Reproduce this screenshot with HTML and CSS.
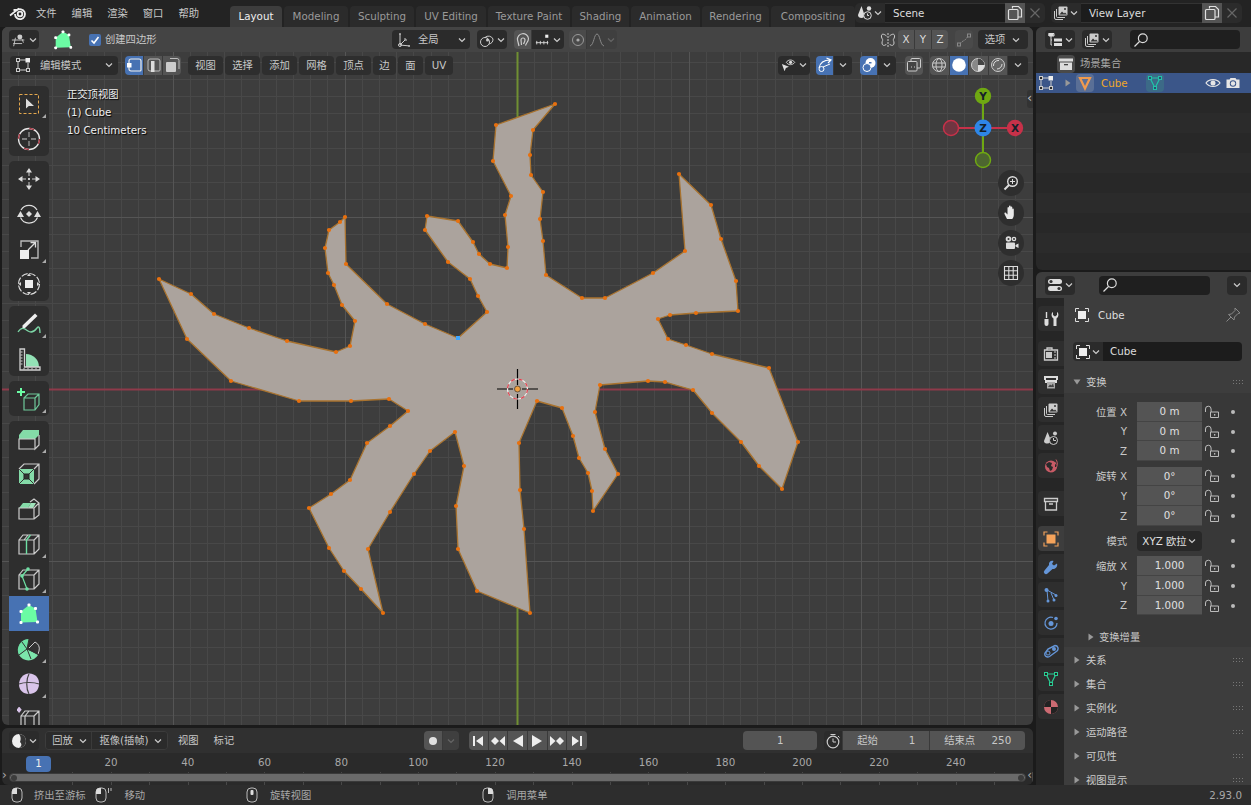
FILE: index.html
```html
<!DOCTYPE html>
<html lang="zh">
<head>
<meta charset="utf-8">
<title>Blender</title>
<link rel="stylesheet" href="styles.css">
</head>
<body>
<svg class="sprite" aria-hidden="true">
<symbol id="chev" viewBox="0 0 10 10"><path d="M2 3.5l3 3 3-3" fill="none" stroke="currentColor" stroke-width="1.2"/></symbol>
<symbol id="trir" viewBox="0 0 10 10"><path d="M2.5 1.5l5 3.5-5 3.5z" fill="#999"/></symbol>
<symbol id="trid" viewBox="0 0 10 10"><path d="M1.5 2.5h7L5 7.5z" fill="#999"/></symbol>
<symbol id="lock" viewBox="0 0 16 16"><path d="M6.5 8h8v5.500h-8zM1.500 8V5a2.800 2.800 0 0 1 5.600 0v3" fill="none" stroke="#bbb"/><rect x="10" y="10" width="1.300" height="1.600" fill="#bbb"/></symbol>
<symbol id="grip" viewBox="0 0 12 6"><path d="M1 1h1v1H1zM4 1h1v1H4zM7 1h1v1H7zM10 1h1v1h-1zM1 4h1v1H1zM4 4h1v1H4zM7 4h1v1H7zM10 4h1v1h-1z" fill="#777"/></symbol>
<symbol id="blender" viewBox="0 0 18 16"><circle cx="11" cy="9" r="2.300" fill="none" stroke="#eee" stroke-width="1.800"/><path d="M1 10.500L8 5H4.500M6 9a5 5 0 1 0 1.800-3.700L10 3.500" fill="none" stroke="#eee" stroke-width="1.800"/></symbol>
<symbol id="toolset" viewBox="0 0 18 16"><circle cx="10" cy="4.500" r="2.800" fill="#ccc"/><path d="M1 8h14M2.500 12h10M5 5.500L3 15M12.500 7l1.500 4" fill="none" stroke="#ccc"/></symbol>
<symbol id="blob" viewBox="0 0 24 24"><path d="M12 3l6.500 3.500L20.500 20 4 20.500 4 9.500z" fill="#6bfca4"/><g fill="#fff"><rect x="10.500" y="1.500" width="3" height="3" rx="1"/><rect x="17" y="5" width="3" height="3" rx="1"/><rect x="19" y="18.500" width="3" height="3" rx="1"/><rect x="2.500" y="19" width="3" height="3" rx="1"/><rect x="2.500" y="8" width="3" height="3" rx="1"/></g></symbol>
<symbol id="orient" viewBox="0 0 16 16"><path d="M4 1.500V13L14 14M4 13L9 8" fill="none" stroke="#ccc"/><path d="M3 2h2M13 13v2M8 7h2v2" fill="none" stroke="#ccc"/><circle cx="4" cy="13" r="1.500" fill="none" stroke="#ccc"/></symbol>
<symbol id="pivot" viewBox="0 0 16 16"><circle cx="6" cy="10" r="4.500" fill="none" stroke="#ccc"/><path d="M6 5.500a5 5 0 0 1 8 1.500a5 5 0 0 1-4 5" fill="none" stroke="#ccc"/><circle cx="8.500" cy="8" r="1.500" fill="#ccc"/></symbol>
<symbol id="magnet" viewBox="0 0 16 16"><path d="M4 14L2.500 8a5.500 5.500 0 0 1 11-1.500c0 3-2 4-3 7M6.500 13L6 8a2 2 0 0 1 4 0c0 1.500-1 3-1.500 4" fill="none" stroke="#ccc" stroke-width="1.200"/></symbol>
<symbol id="incr" viewBox="0 0 18 16"><path d="M1 11h14M2 9v4M6 9v4M10 9v4M14 9v4" fill="none" stroke="#ddd"/><rect x="11.500" y="2" width="3.500" height="3.500" fill="#eee"/></symbol>
<symbol id="propdot" viewBox="0 0 16 16"><circle cx="8" cy="8" r="5.500" fill="none" stroke="#999"/><circle cx="8" cy="8" r="1.600" fill="#aaa"/></symbol>
<symbol id="falloff" viewBox="0 0 16 16"><path d="M1 14C5 13 5 2 8 2s3 11 7 12" fill="none" stroke="#888"/></symbol>
<symbol id="mirror" viewBox="0 0 16 16"><path d="M8 1v14" stroke="#ccc" stroke-dasharray="2 1"/><path d="M6.500 4C3 1 1 2 1.500 5c.3 1.500 1.500 3 1.500 3s-1 1-1 3c0 3 3 3 4.500 1M9.500 4C13 1 15 2 14.500 5c-.3 1.500-1.500 3-1.500 3s1 1 1 3c0 3-3 3-4.500 1" fill="none" stroke="#ccc"/></symbol>
<symbol id="automerge" viewBox="0 0 16 16"><path d="M4 12C6 8 9 10 12 4" fill="none" stroke="#888" stroke-dasharray="2 1"/><rect x="1.500" y="11" width="3" height="3" fill="none" stroke="#888"/><rect x="11.500" y="2" width="3" height="3" fill="none" stroke="#888"/></symbol>
<symbol id="editmode" viewBox="0 0 16 16"><path d="M3 3h8M3 3v10h10V6" fill="none" stroke="#ccc"/><rect x="1.500" y="1.500" width="3" height="3" fill="#2a2a2a" stroke="#ccc"/><rect x="1.500" y="11.500" width="3" height="3" fill="#2a2a2a" stroke="#ccc"/><rect x="11.500" y="11.500" width="3" height="3" fill="#2a2a2a" stroke="#ccc"/><rect x="10.500" y="1" width="4.500" height="4.500" fill="#eee"/></symbol>
<symbol id="selv" viewBox="0 0 16 16"><path d="M3 4a2 2 0 0 1 2-2h8a2 2 0 0 1 2 2v9a1 1 0 0 1-1 1H5a2 2 0 0 1-2-2z" fill="none" stroke="#eee" stroke-width="1.200"/><rect x="1" y="6" width="4.500" height="4.500" fill="#fff"/></symbol>
<symbol id="sele" viewBox="0 0 16 16"><path d="M3 4a2 2 0 0 1 2-2h8a2 2 0 0 1 2 2v9a1 1 0 0 1-1 1H5a2 2 0 0 1-2-2z" fill="none" stroke="#bbb"/><rect x="6" y="4" width="3.500" height="11" fill="#ddd"/></symbol>
<symbol id="self" viewBox="0 0 16 16"><path d="M6 1.500h7a2 2 0 0 1 2 2V12" fill="none" stroke="#bbb"/><rect x="2" y="5" width="10" height="10" rx="1" fill="#ccc"/></symbol>
<symbol id="vis" viewBox="0 0 18 16"><path d="M6 5c2-3.500 7-3.500 9.500 0-2.500 3.500-7.500 3.500-9.500 0z" fill="none" stroke="#ddd"/><circle cx="10.800" cy="5" r="1.800" fill="#ddd"/><path d="M1 7l8 3-3.500 1.500L4 15z" fill="#ddd"/></symbol>
<symbol id="gizmoic" viewBox="0 0 16 16"><path d="M2 11C3 6 7 3 13 3M9.500 1L14 3l-3 3" fill="none" stroke="#fff" stroke-width="1.200"/><circle cx="4.500" cy="12" r="2.500" fill="none" stroke="#fff"/><path d="M6 10L13 7" stroke="#fff"/></symbol>
<symbol id="overlay" viewBox="0 0 16 16"><circle cx="9.500" cy="6" r="5" fill="#fff"/><circle cx="6" cy="10.500" r="4" fill="#4772b3" stroke="#fff"/><path d="M8 5h2.500v1.500H8z" fill="#4772b3"/></symbol>
<symbol id="xray" viewBox="0 0 16 16"><rect x="5" y="1.500" width="9.500" height="9.500" rx="1" fill="none" stroke="#ccc"/><rect x="1.500" y="4.500" width="9.500" height="9.500" rx="1" fill="#444" stroke="#ccc"/><path d="M5 10h1M8 10h1" stroke="#ccc"/></symbol>
<symbol id="shwire" viewBox="0 0 16 16"><circle cx="8" cy="8" r="6.500" fill="none" stroke="#ccc"/><ellipse cx="8" cy="8" rx="3" ry="6.500" fill="none" stroke="#ccc"/><path d="M1.500 6h13M1.500 10h13" stroke="#ccc"/></symbol>
<symbol id="shsolid" viewBox="0 0 16 16"><circle cx="8" cy="8" r="6.800" fill="#fff"/></symbol>
<symbol id="shmat" viewBox="0 0 16 16"><circle cx="8" cy="8" r="6.500" fill="#888" stroke="#ccc"/><path d="M8 1.500a6.500 6.500 0 0 1 6.500 6.500H8z" fill="#444"/><path d="M8 8h6.500A6.500 6.500 0 0 1 8 14.500z" fill="#ddd"/></symbol>
<symbol id="shrend" viewBox="0 0 16 16"><circle cx="8" cy="8" r="6.500" fill="#666" stroke="#ccc"/><path d="M3.500 9A5 5 0 0 1 9 3.500M12 7a5 5 0 0 1-5 5" fill="none" stroke="#ddd"/></symbol>
<symbol id="zoomin" viewBox="0 0 16 16"><circle cx="9.500" cy="6.500" r="4.800" fill="none" stroke="#ddd" stroke-width="1.400"/><path d="M6 10L1.500 14.500" stroke="#ddd" stroke-width="2"/><path d="M7 6.500h5M9.500 4v5" stroke="#ddd"/></symbol>
<symbol id="hand" viewBox="0 0 16 16"><path d="M4 14L1.500 9c-.5-1 .8-2 1.500-1l1.500 1.500V3c0-1.200 1.500-1.200 1.500 0v4-5.500c0-1.200 1.700-1.200 1.700 0V7 2.500c0-1.200 1.600-1.200 1.600 0V7.500 4.500c0-1.200 1.500-1.200 1.500 0V10c0 2-1 3-1.500 4z" fill="#e8e8e8"/></symbol>
<symbol id="camnav" viewBox="0 0 16 16"><circle cx="5.500" cy="4" r="2.800" fill="#ddd"/><circle cx="11" cy="4" r="2.300" fill="#ddd"/><rect x="3" y="7.500" width="9" height="6.500" rx="1" fill="#ddd"/><path d="M12.500 10l3-1.500v4.500l-3-1.500z" fill="#ddd"/><circle cx="5.500" cy="4" r="1" fill="#333"/><circle cx="11" cy="4" r="1" fill="#333"/></symbol>
<symbol id="gridic" viewBox="0 0 16 16"><path d="M1.500 1.500h13v13h-13zM1.500 5.800h13M1.500 10.200h13M5.800 1.500v13M10.200 1.500v13" fill="none" stroke="#ddd" stroke-width="1.100"/></symbol>

<symbol id="t-select" viewBox="0 0 24 24"><rect x="2.500" y="2.500" width="19" height="19" fill="none" stroke="#e4a84e" stroke-dasharray="3 2"/><path d="M9 6.500l0 10 2.800-2.500H17z" fill="#ddd"/></symbol>
<symbol id="t-cursor" viewBox="0 0 24 24"><circle cx="12" cy="12" r="10.500" fill="none" stroke="#e6e6e6" stroke-width="1.300"/><circle cx="12" cy="12" r="10.500" fill="none" stroke="#a8323f" stroke-width="1.300" stroke-dasharray="5 11.500"/><path d="M12 5v5M12 14v5M5 12h5M14 12h5" stroke="#999" stroke-width="1.300"/></symbol>
<symbol id="t-move" viewBox="0 0 24 24"><path d="M12 1l3 4.500H9zM12 23l3-4.500H9zM1 12l4.500-3v6zM23 12l-4.500-3v6z" fill="#ddd"/><path d="M12 5v4M12 15v4M5 12h4M15 12h4" stroke="#ccc"/><rect x="11" y="11" width="2" height="2" fill="#ccc"/></symbol>
<symbol id="t-rotate" viewBox="0 0 24 24"><path d="M4 8a9.300 9.300 0 0 1 16 0M20.500 15.500a9.300 9.300 0 0 1-17 0" fill="none" stroke="#ddd" stroke-width="1.200"/><path d="M12 9l3 3-3 3-3-3z" fill="#ddd"/><path d="M0 15l3.500-6 3.500 6zM17 15l3.500-6 3.500 6z" fill="#ddd"/></symbol>
<symbol id="t-scale" viewBox="0 0 24 24"><path d="M4 10V4h17v17h-7" fill="none" stroke="#bbb" stroke-width="1.400"/><rect x="3" y="13" width="9" height="9" fill="#eee"/><path d="M11 13l7-7M13.500 5.500H18.500V10.500" fill="none" stroke="#ddd" stroke-width="1.300"/></symbol>
<symbol id="t-transform" viewBox="0 0 24 24"><circle cx="12" cy="12" r="10.500" fill="none" stroke="#ddd" stroke-width="1.200" stroke-dasharray="6.500 1.750"/><rect x="8" y="8" width="8" height="8" fill="#eee"/><path d="M12 1.500l2 2.500h-4zM12 22.500l2-2.500h-4zM1.500 12l2.500-2v4zM22.500 12l-2.500-2v4z" fill="#ddd"/></symbol>
<symbol id="t-annot" viewBox="0 0 24 24"><path d="M1 20c4-6 7-3 10-1s6 1 9-3 3 5 3 5" fill="none" stroke="#7ed8a8" stroke-width="1.300"/><path d="M18 1.500l2.500 2.500L8 16H5.500v-2.500z" fill="#eee"/></symbol>
<symbol id="t-measure" viewBox="0 0 24 24"><path d="M9 7a13 13 0 0 1 13 13H9z" fill="#93e2b6"/><path d="M3 2h4.500v18H23v3H3z" fill="none" stroke="#d0d0d0" stroke-width="1.300"/><path d="M3.500 5h2M3.500 8h2M3.500 11h2M3.500 14h2M3.500 17h2M7 21v1.500M11 21v1.500M15 21v1.500M19 21v1.500" stroke="#d0d0d0"/></symbol>
<symbol id="t-add" viewBox="0 0 24 24"><path d="M7 11l4-4h11v10.500L18 23H7zM7 11h11v12M18 11l4-4" fill="none" stroke="#6ec99a" stroke-width="1.200"/><path d="M4 1v8M0 5h8" stroke="#6bfca4" stroke-width="2"/></symbol>
<symbol id="t-extrude" viewBox="0 0 24 24"><path d="M2 8l4-5h16v5l-4 4H2z" fill="#84dba8"/><path d="M2 12h16v10H2zM18 12v10l4-4V8" fill="none" stroke="#ccc" stroke-width="1.200"/></symbol>
<symbol id="t-inset" viewBox="0 0 24 24"><path d="M2 7h15v15H2z" fill="#84dba8"/><rect x="7" y="12" width="5" height="5" fill="#333" stroke="#222"/><path d="M2 7l5 5M17 7l-5 5M2 22l5-5M17 22l-5-5" stroke="#333"/><path d="M2 7l5-5h15v15l-5 5M17 7l5-5" fill="none" stroke="#ccc" stroke-width="1.200"/></symbol>
<symbol id="t-bevel" viewBox="0 0 24 24"><path d="M2 11l4-5h8l-3 5z" fill="#84dba8"/><path d="M11 11l3-5h5l-3 5z" fill="#9fe3bb"/><path d="M2 11h15v11H2zM17 11l5-5-5-4-4 3M17 22l5-4V6" fill="none" stroke="#ccc" stroke-width="1.200"/></symbol>
<symbol id="t-loop" viewBox="0 0 24 24"><path d="M2 8h15v14H2zM2 8l4-5h16v14l-5 5M17 8l5-5M7 8l4-5" fill="none" stroke="#ccc" stroke-width="1.200"/><path d="M9.500 8v14M9.500 8l4-5" stroke="#6ee0a4" stroke-width="1.400" fill="none"/></symbol>
<symbol id="t-knife" viewBox="0 0 24 24"><path d="M2 8h15v14H2zM2 8l4-5h16v14l-5 5M17 8l5-5" fill="none" stroke="#ccc" stroke-width="1.200"/><path d="M5 9l5 13M5 9l6-7" stroke="#6ee0a4" stroke-width="1.200" fill="none"/><circle cx="5" cy="9" r="1.800" fill="#6ee0a4"/><circle cx="11" cy="2" r="1.800" fill="#6ee0a4"/><circle cx="10" cy="22" r="1.800" fill="#6ee0a4"/></symbol>
<symbol id="t-spin" viewBox="0 0 24 24"><path d="M10 12L12 2A11 11 0 0 0 2 18z" fill="#6ee0a4"/><path d="M10 12L2 18a11 11 0 0 0 19 0z" fill="#7ce5ab"/><path d="M12 11l6-6a8 8 0 0 1 4 9l-1 3" fill="#333" stroke="#ccc"/><path d="M10 12L5 5M10 12L14 22M10 12L2 18M10 12L21 17M10 12l2-10" stroke="#333" fill="none"/></symbol>
<symbol id="t-smooth" viewBox="0 0 24 24"><path d="M12 1.500c7 0 10.500 5 10 11s-4 9.500-10 9.500-10-4-10-9.500S6 1.500 12 1.500z" fill="#d9c4ea"/><path d="M2 12c5-2 15-2 20 0M12 2c-3 5-3 15 0 20" fill="none" stroke="#444" stroke-width="1.200"/></symbol>
<symbol id="t-shrink" viewBox="0 0 24 24"><path d="M4 9h13v15H4zM4 9l4-5h14v15l-5 5M17 9l5-5M8 9l4-5M8 9v15" fill="none" stroke="#ccc" stroke-width="1.200"/><path d="M2 0l2 2.500L2 5 0 2.500z" fill="#d9c4ea" transform="translate(-0.500 -0.500) scale(1.300)"/></symbol>

<symbol id="outmode" viewBox="0 0 16 16"><path d="M2 1.500h5v2.500H2zM4 4v9h1M4 8h1" fill="none" stroke="#ddd"/><rect x="1.500" y="1" width="5" height="3" fill="#ddd"/><rect x="7" y="6.500" width="8" height="3" fill="#ddd"/><rect x="7" y="11" width="8" height="3" fill="#ddd"/></symbol>
<symbol id="layers" viewBox="0 0 16 16"><path d="M1.500 6v7a1.500 1.500 0 0 0 1.500 1.500h7M3.500 4v7.500a1 1 0 0 0 1 1H12" fill="none" stroke="#ccc"/><rect x="5.500" y="1.500" width="9" height="9" rx="1" fill="#ccc"/><path d="M6.500 9.500l2.500-3 2 2 1-1 2 2z" fill="#333"/><circle cx="12" cy="4" r="1" fill="#333"/></symbol>
<symbol id="search" viewBox="0 0 16 16"><circle cx="9.800" cy="6.200" r="4.400" fill="none" stroke="#ddd" stroke-width="1.200"/><path d="M6.500 9.500l-5 5" stroke="#ddd" stroke-width="1.300"/></symbol>
<symbol id="copy" viewBox="0 0 16 16"><path d="M5.500 3.500V1.500h6l3 3V12H11" fill="none" stroke="#e0e0e0" stroke-width="1.200"/><rect x="1.500" y="4.500" width="9.500" height="10" rx="1" fill="none" stroke="#e0e0e0" stroke-width="1.200"/></symbol>
<symbol id="xic" viewBox="0 0 16 16"><path d="M3.500 3.500l9 9M12.500 3.500l-9 9" stroke="#666" stroke-width="1.200"/></symbol>
<symbol id="scene" viewBox="0 0 16 16"><path d="M4.500 1L1 10c0 2 1.500 3 3.500 3s3-1 3-3z" fill="#ddd"/><circle cx="12" cy="3.500" r="2.200" fill="#ddd"/><circle cx="10.500" cy="10.500" r="3.800" fill="#333" stroke="#ddd"/><path d="M10.500 8.500v2h1.500" stroke="#ddd" fill="none"/></symbol>
<symbol id="box" viewBox="0 0 16 16"><path d="M1 2.500h14v3H1z" fill="#ddd"/><path d="M2 6.500h12V14H2z" fill="#ddd"/><rect x="6" y="8" width="4" height="1.300" fill="#444"/></symbol>
<symbol id="meshtri" viewBox="0 0 16 16"><path d="M3 3h10L8 13.500z" fill="none" stroke="#f09a4e" stroke-width="2.200"/></symbol>
<symbol id="datatri" viewBox="0 0 16 16"><path d="M3 3h10L8 13z" fill="none" stroke="#21c3a8" stroke-width="1.200"/><rect x="1.500" y="1.500" width="3" height="3" fill="#2c4b73" stroke="#21c3a8"/><rect x="11.500" y="1.500" width="3" height="3" fill="#2c4b73" stroke="#21c3a8"/><rect x="6.500" y="11.500" width="3" height="3" fill="#2c4b73" stroke="#21c3a8"/></symbol>
<symbol id="eye" viewBox="0 0 16 16"><path d="M1 8c3-4.500 11-4.500 14 0-3 4.500-11 4.500-14 0z" fill="none" stroke="#e6e6e6" stroke-width="1.200"/><circle cx="8" cy="8" r="2.500" fill="#e6e6e6"/></symbol>
<symbol id="cam" viewBox="0 0 16 16"><path d="M1.500 4.500h3L5.500 3h5l1 1.500h3V13h-13z" fill="#e6e6e6"/><circle cx="8" cy="8.500" r="3.200" fill="#3b5689"/><circle cx="8" cy="8.500" r="2.200" fill="#e6e6e6"/></symbol>
<symbol id="obj" viewBox="0 0 16 16"><path d="M1.500 5V1.500H5M11 1.500h3.500V5M14.500 11v3.500H11M5 14.500H1.500V11" fill="none" stroke="#ddd"/><rect x="4" y="4" width="8" height="8" fill="#eee"/></symbol>
<symbol id="objo" viewBox="0 0 16 16"><path d="M1 4.500V1h3.500M11.500 1H15v3.500M15 11.500V15h-3.500M4.500 15H1v-3.500" fill="none" stroke="#f0a05a" stroke-width="1.200"/><rect x="3.500" y="3.500" width="9" height="9" fill="#f5a35b"/></symbol>
<symbol id="pin" viewBox="0 0 16 16"><path d="M10 1l5 5-2 .5-3.500 3.500-.5 3-5.500-5.500 3-.5L10 3.500zM6 10l-4.500 4.500" fill="none" stroke="#888"/></symbol>
<symbol id="ptool" viewBox="0 0 16 16"><path d="M3.500 1v6" stroke="#ddd" stroke-width="1.400"/><path d="M1.500 8h4v5a2 2 0 0 1-4 0z" fill="#ddd"/><path d="M10 1v3l2 1.500L14 4V1c2 1 2 5-.5 6.500V15h-3V7.500C8 6 8 2 10 1z" fill="#ddd"/></symbol>
<symbol id="prender" viewBox="0 0 16 16"><path d="M1.500 4h13v10h-13zM4 4V2h5v2" fill="none" stroke="#ccc" stroke-width="1.300"/><rect x="3" y="6" width="6" height="6" fill="#ccc"/><path d="M11 6h2M11 9h2M11 12h2" stroke="#ccc"/></symbol>
<symbol id="poutput" viewBox="0 0 16 16"><path d="M1 2h14v4h-2V4H3v2H1zM2 6h12v3H2z" fill="#ddd"/><rect x="4" y="8" width="8" height="6.500" fill="#aaa"/><path d="M5 13l2-2.500 1.500 1 1.500-2 1 3.500z" fill="#444"/></symbol>
<symbol id="pscene" viewBox="0 0 16 16"><path d="M4.500 2L1 11c0 2 1.500 2.500 3.500 2.500 1 0 2-.5 3-1.500V9z" fill="#ccc"/><circle cx="12" cy="3.500" r="2" fill="#ccc"/><circle cx="10.500" cy="10.500" r="4" fill="#2a2a2a" stroke="#ccc"/><path d="M10.500 8v2.500H13" stroke="#ccc" fill="none"/></symbol>
<symbol id="pworld" viewBox="0 0 16 16"><circle cx="8" cy="8.500" r="6" fill="#c85b66"/><path d="M3 6l3-2 3 1-1 3 2 1-1 3-2 1-1-3-2-1zM12 6l2 1v2l-2 0z" fill="#2a2a2a"/><path d="M13 1.500C15.500 5 14.500 11 9 14" fill="none" stroke="#c85b66"/></symbol>
<symbol id="pcoll" viewBox="0 0 16 16"><path d="M1.500 2.500h13v3h-13zM2.500 5.500v8.500h11V5.500M6 8h4" fill="none" stroke="#ccc" stroke-width="1.300"/></symbol>
<symbol id="pmod" viewBox="0 0 16 16"><path d="M14 4.500l-3 2-2-1.500 1.500-3C8 1 5.500 3 6 6L1.500 11.500a2 2 0 0 0 3 3L9.500 10c3 .5 5.500-2.500 4.500-5.500z" fill="#6596d8"/></symbol>
<symbol id="ppart" viewBox="0 0 16 16"><path d="M4 3l1 11M4 3l9 5" stroke="#6596d8"/><circle cx="3.500" cy="3" r="2" fill="#6596d8"/><circle cx="5" cy="14" r="1.500" fill="#6596d8"/><circle cx="13" cy="8.500" r="1.500" fill="#6596d8"/><circle cx="11" cy="13" r="1.500" fill="#6596d8"/><path d="M8 6l3 7" stroke="#6596d8"/></symbol>
<symbol id="pphys" viewBox="0 0 16 16"><path d="M10 2.500A6 6 0 1 0 14 8" fill="none" stroke="#6596d8" stroke-width="1.200"/><circle cx="8" cy="8.500" r="2.500" fill="#6596d8"/><circle cx="13" cy="3.500" r="1.800" fill="#6596d8"/></symbol>
<symbol id="pcons" viewBox="0 0 16 16"><path d="M2 10c-1 3 2 5 4.500 3.500L14 8c2-2 1-5.500-2-5.500L5 6z" fill="none" stroke="#6596d8" stroke-width="1.400"/><circle cx="5" cy="10" r="2" fill="none" stroke="#6596d8"/><circle cx="11" cy="6" r="2" fill="#6596d8"/></symbol>
<symbol id="pdata" viewBox="0 0 16 16"><path d="M3 3h10L8 13z" fill="none" stroke="#2acb93" stroke-width="1.200"/><rect x="1.500" y="1.500" width="3" height="3" fill="#222" stroke="#2acb93"/><rect x="11.500" y="1.500" width="3" height="3" fill="#222" stroke="#2acb93"/><rect x="6.500" y="11.500" width="3" height="3" fill="#222" stroke="#2acb93"/></symbol>
<symbol id="pmat" viewBox="0 0 16 16"><circle cx="8" cy="8" r="7" fill="#cc6a72"/><path d="M8 8h7a7 7 0 0 1-7 7zM1 8a7 7 0 0 1 7-7v7z" fill="#222"/></symbol>
<symbol id="ptoggle" viewBox="0 0 16 16"><rect x="1" y="2" width="14" height="5" rx="2.500" fill="#ddd"/><rect x="1" y="9" width="14" height="5" rx="2.500" fill="#ddd"/><circle cx="4" cy="4.500" r="1.600" fill="#333"/><circle cx="12" cy="11.500" r="1.600" fill="#333"/></symbol>

<symbol id="timeic" viewBox="0 0 16 16"><circle cx="8" cy="8" r="7" fill="#eee"/><path d="M8 1a7 7 0 0 1 0 14c3-2 3-4 1-6 1-3 1-5-1-8z" fill="#333"/></symbol>
<symbol id="rec" viewBox="0 0 16 16"><circle cx="8" cy="8" r="4" fill="#e0e0e0"/></symbol>
<symbol id="jstart" viewBox="0 0 16 16"><path d="M3 3h2v10H3zM13 3v10L6 8z" fill="#eee"/></symbol>
<symbol id="kprev" viewBox="0 0 16 16"><path d="M5 4l4 4-4 4-4-4zM15 3v10L9.500 8z" fill="#eee"/></symbol>
<symbol id="prev" viewBox="0 0 16 16"><path d="M13 2v12L3 8z" fill="#eee"/></symbol>
<symbol id="play" viewBox="0 0 16 16"><path d="M3 2v12l10-6z" fill="#eee"/></symbol>
<symbol id="knext" viewBox="0 0 16 16"><path d="M11 4l4 4-4 4-4-4zM1 3v10L6.500 8z" fill="#eee"/></symbol>
<symbol id="jend" viewBox="0 0 16 16"><path d="M13 3h-2v10h2zM3 3v10l7-5z" fill="#eee"/></symbol>
<symbol id="timer" viewBox="0 0 16 16"><circle cx="8" cy="9" r="5.800" fill="none" stroke="#ccc" stroke-width="1.200"/><path d="M5.500 1.500h5M8 5.500V9h3M13 3l1.500 1.500" fill="none" stroke="#ccc"/></symbol>
<symbol id="mouseL" viewBox="0 0 16 16"><rect x="3" y="1" width="10" height="14" rx="4" fill="none" stroke="#bbb"/><path d="M3 5a4 4 0 0 1 4-4h1v6H3z" fill="#ddd"/></symbol>
<symbol id="mouseD" viewBox="0 0 20 16"><rect x="2" y="1" width="10" height="14" rx="4" fill="none" stroke="#bbb"/><path d="M2 5a4 4 0 0 1 4-4h1v6H2z" fill="#ddd"/><path d="M14.500 1v5M17 1v3" stroke="#bbb"/></symbol>
<symbol id="mouseM" viewBox="0 0 16 16"><rect x="3" y="1" width="10" height="14" rx="4" fill="none" stroke="#bbb"/><rect x="6.500" y="3" width="3" height="5" rx="1" fill="#ddd"/></symbol>
<symbol id="mouseR" viewBox="0 0 16 16"><rect x="3" y="1" width="10" height="14" rx="4" fill="none" stroke="#bbb"/><path d="M13 5a4 4 0 0 0-4-4H8v6h5z" fill="#ddd"/></symbol>
</svg>

<header class="topbar">
  <svg class="ic logo"><use href="#blender"/></svg>
  <nav class="mainmenu"><span>文件</span><span>编辑</span><span>渲染</span><span>窗口</span><span>帮助</span></nav>
  <div class="tabs">
    <span class="tab active">Layout</span><span class="tab">Modeling</span><span class="tab">Sculpting</span><span class="tab">UV Editing</span><span class="tab">Texture Paint</span><span class="tab">Shading</span><span class="tab">Animation</span><span class="tab">Rendering</span><span class="tab">Compositing</span>
  </div>
  <div class="idfield scene">
    <span class="idicon"><svg class="ic"><use href="#scene"/></svg><svg class="chev"><use href="#chev"/></svg></span>
    <span class="idname">Scene</span>
    <span class="idbtn lit"><svg class="ic"><use href="#copy"/></svg></span>
    <span class="idbtn"><svg class="ic"><use href="#xic"/></svg></span>
  </div>
  <div class="idfield layer">
    <span class="idicon"><svg class="ic"><use href="#layers"/></svg><svg class="chev"><use href="#chev"/></svg></span>
    <span class="idname">View Layer</span>
    <span class="idbtn lit"><svg class="ic"><use href="#copy"/></svg></span>
    <span class="idbtn"><svg class="ic"><use href="#xic"/></svg></span>
  </div>
</header>

<main class="workspace">
  <div class="leftcol">
    <section class="viewport">
      <svg class="canvas" viewBox="2 27 1031 698" aria-hidden="true">
        <defs>
          <pattern id="gridminor" x="517" y="389" width="172" height="172" patternUnits="userSpaceOnUse">
            <path shape-rendering="crispEdges" d="M17.200 0V172M34.400 0V172M51.600 0V172M68.800 0V172M86 0V172M103.200 0V172M120.400 0V172M137.600 0V172M154.800 0V172M0 17.200H172M0 34.400H172M0 51.600H172M0 68.800H172M0 86H172M0 103.200H172M0 120.400H172M0 137.600H172M0 154.800H172" stroke="#484848" fill="none"/>
            <path shape-rendering="crispEdges" d="M.5 0V172M0 .5H172" stroke="#555" fill="none"/>
          </pattern>
        </defs>
        <rect x="2" y="27" width="1031" height="698" fill="url(#gridminor)"/>
        <path d="M2 389.500H1033" stroke="#8e3a4a" stroke-width="2"/>
        <path d="M517.500 52V725" stroke="#708f33" stroke-width="2"/>
        <path d="M159 279L191 294 214 314 249 328 287 341 336 352 350 346 355 321 342 305 334 285 328 273 325 248 329 230 340 222 345 217 346 264 387 304 425 324 458 338 487 312 478 296 470 279 448 262 425 230 427 216 458 221 473 242 479 254 490 264 507 268 508 247 505 215 511 196 493 161 496 125 555 104 533 130 530 155 531 175 543 192 540 219 543 241 546 275 582 298 605 298 653 273 685 251 679 174 711 205 721 239 736 281 738 311 696 313 670 315 658 319 668 339 686 345 712 354 769 368 798 442 782 489 759 466 741 442 712 413 693 390 665 382 648 381 600 385 595 412 605 449 618 474 593 511 592 491 588 473 579 458 573 436 562 408 537 401 519 443 520 490 524 529 530 613 477 591 458 549 456 506 464 466 455 432 430 451 414 474 390 512 368 549 383 613 361 589 344 571 329 548 309 508 331 494 350 480 367 443 390 426 408 411 389 399 351 401 299 401 231 381 187 339Z" fill="#aba39d" stroke="#a9732f" stroke-width="1.300" stroke-linejoin="round"/>
        <path d="M159 279h0M191 294h0M214 314h0M249 328h0M287 341h0M336 352h0M350 346h0M355 321h0M342 305h0M334 285h0M328 273h0M325 248h0M329 230h0M340 222h0M345 217h0M346 264h0M387 304h0M425 324h0M487 312h0M478 296h0M470 279h0M448 262h0M425 230h0M427 216h0M458 221h0M473 242h0M479 254h0M490 264h0M507 268h0M508 247h0M505 215h0M511 196h0M493 161h0M496 125h0M555 104h0M533 130h0M530 155h0M531 175h0M543 192h0M540 219h0M543 241h0M546 275h0M582 298h0M605 298h0M653 273h0M685 251h0M679 174h0M711 205h0M721 239h0M736 281h0M738 311h0M696 313h0M670 315h0M658 319h0M668 339h0M686 345h0M712 354h0M769 368h0M798 442h0M782 489h0M759 466h0M741 442h0M712 413h0M693 390h0M665 382h0M648 381h0M600 385h0M595 412h0M605 449h0M618 474h0M593 511h0M592 491h0M588 473h0M579 458h0M573 436h0M562 408h0M537 401h0M519 443h0M520 490h0M524 529h0M530 613h0M477 591h0M458 549h0M456 506h0M464 466h0M455 432h0M430 451h0M414 474h0M390 512h0M368 549h0M383 613h0M361 589h0M344 571h0M329 548h0M309 508h0M331 494h0M350 480h0M367 443h0M390 426h0M408 411h0M389 399h0M351 401h0M299 401h0M231 381h0M187 339h0" stroke="#e8700e" stroke-width="4.200" stroke-linecap="round"/>
        <rect x="456" y="336" width="4" height="4" fill="#3ea6ff"/>
        <path d="M497 389h16M522 389h16M517.500 369v16M517.500 394v15" stroke="#000" stroke-width="1.200"/>
        <circle cx="517.500" cy="389" r="10" fill="none" stroke="#eee" stroke-width="1.200"/>
        <circle cx="517.500" cy="389" r="10" fill="none" stroke="#e0404e" stroke-width="1.200" stroke-dasharray="4 4"/>
        <circle cx="517.500" cy="389" r="3" fill="#f0a040" stroke="#222" stroke-width=".6"/>
        <path d="M983 96V160" stroke="#6fa812" stroke-width="2"/>
        <path d="M951 128H1015" stroke="#c73149" stroke-width="2"/>
        <circle cx="951" cy="128" r="7.500" fill="#6f3541" stroke="#c73149" stroke-width="1.500"/>
        <circle cx="983" cy="160" r="7.500" fill="#4d6630" stroke="#6fa812" stroke-width="1.500"/>
        <circle cx="983" cy="96" r="8.200" fill="#6fa812"/>
        <circle cx="1015" cy="128" r="8.200" fill="#c73149"/>
        <circle cx="983" cy="128" r="8.500" fill="#2e86e8"/>
        <g class="axislabel"><text x="983" y="100">Y</text><text x="1015" y="132">X</text><text x="983" y="132">Z</text></g>
      </svg>

      <div class="toolhdr">
        <span class="dd th-tool"><svg class="ic"><use href="#toolset"/></svg><svg class="chev"><use href="#chev"/></svg></span>
        <svg class="ic th-blob"><use href="#blob"/></svg>
        <label class="th-check"><span class="checkbox"><svg viewBox="0 0 12 12"><path d="M2.500 6.500l2.500 2.500 4.500-6" fill="none" stroke="#fff" stroke-width="1.600"/></svg></span>创建四边形</label>
        <span class="dd th-orient"><svg class="ic"><use href="#orient"/></svg><span class="ddlabel">全局</span><svg class="chev"><use href="#chev"/></svg></span>
        <span class="dd th-pivot"><svg class="ic"><use href="#pivot"/></svg><svg class="chev"><use href="#chev"/></svg></span>
        <span class="joined th-snap"><span class="seg lit"><svg class="ic"><use href="#magnet"/></svg></span><span class="seg dark grow"><svg class="ic"><use href="#incr"/></svg><svg class="chev"><use href="#chev"/></svg></span></span>
        <span class="joined th-prop"><span class="seg lit dim"><svg class="ic"><use href="#propdot"/></svg></span><span class="seg mid grow"><svg class="ic"><use href="#falloff"/></svg><svg class="chev dimc"><use href="#chev"/></svg></span></span>
        <div class="thright">
          <svg class="ic th-mirror"><use href="#mirror"/></svg>
          <span class="xyz"><span>X</span><span>Y</span><span>Z</span></span>
          <span class="automerge"><svg class="ic"><use href="#automerge"/></svg></span>
          <span class="dd th-options">选项<svg class="chev"><use href="#chev"/></svg></span>
        </div>
      </div>

      <div class="hdr2">
        <span class="dd h-mode"><svg class="ic"><use href="#editmode"/></svg><span class="ddlabel">编辑模式</span><svg class="chev"><use href="#chev"/></svg></span>
        <span class="joined h-sel"><span class="seg blue"><svg class="ic"><use href="#selv"/></svg></span><span class="seg lit"><svg class="ic"><use href="#sele"/></svg></span><span class="seg lit"><svg class="ic"><use href="#self"/></svg></span></span>
        <span class="menus"><span class="m35">视图</span><span class="m35">选择</span><span class="m35">添加</span><span class="m35">网格</span><span class="m35">顶点</span><span class="m23">边</span><span class="m25">面</span><span class="m28">UV</span></span>
        <div class="thright">
          <span class="dd h-vis"><svg class="ic"><use href="#vis"/></svg><svg class="chev"><use href="#chev"/></svg></span>
          <span class="joined h-giz"><span class="seg blue"><svg class="ic"><use href="#gizmoic"/></svg></span><span class="seg dark grow"><svg class="chev"><use href="#chev"/></svg></span></span>
          <span class="joined h-over"><span class="seg blue"><svg class="ic"><use href="#overlay"/></svg></span><span class="seg dark grow"><svg class="chev"><use href="#chev"/></svg></span></span>
          <span class="joined h-xray"><span class="seg lit grow"><svg class="ic"><use href="#xray"/></svg></span></span>
          <span class="joined h-shade"><span class="seg lit"><svg class="ic"><use href="#shwire"/></svg></span><span class="seg blue"><svg class="ic"><use href="#shsolid"/></svg></span><span class="seg lit"><svg class="ic"><use href="#shmat"/></svg></span><span class="seg lit"><svg class="ic"><use href="#shrend"/></svg></span><span class="seg dark grow"><svg class="chev"><use href="#chev"/></svg></span></span>
        </div>
      </div>

      <div class="vbody">
        <aside class="toolbar">
          <div class="tgroup">
            <span class="tbtn corner"><svg class="tic"><use href="#t-select"/></svg></span>
            <span class="tbtn"><svg class="tic"><use href="#t-cursor"/></svg></span>
          </div>
          <div class="tgroup">
            <span class="tbtn"><svg class="tic"><use href="#t-move"/></svg></span>
            <span class="tbtn"><svg class="tic"><use href="#t-rotate"/></svg></span>
            <span class="tbtn corner"><svg class="tic"><use href="#t-scale"/></svg></span>
            <span class="tbtn"><svg class="tic"><use href="#t-transform"/></svg></span>
          </div>
          <div class="tgroup">
            <span class="tbtn corner"><svg class="tic"><use href="#t-annot"/></svg></span>
            <span class="tbtn"><svg class="tic"><use href="#t-measure"/></svg></span>
          </div>
          <div class="tgroup">
            <span class="tbtn corner"><svg class="tic"><use href="#t-add"/></svg></span>
          </div>
          <div class="tgroup last">
            <span class="tbtn corner"><svg class="tic"><use href="#t-extrude"/></svg></span>
            <span class="tbtn"><svg class="tic"><use href="#t-inset"/></svg></span>
            <span class="tbtn"><svg class="tic"><use href="#t-bevel"/></svg></span>
            <span class="tbtn corner"><svg class="tic"><use href="#t-loop"/></svg></span>
            <span class="tbtn corner"><svg class="tic"><use href="#t-knife"/></svg></span>
            <span class="tbtn active"><svg class="tic"><use href="#blob"/></svg></span>
            <span class="tbtn corner"><svg class="tic"><use href="#t-spin"/></svg></span>
            <span class="tbtn corner"><svg class="tic"><use href="#t-smooth"/></svg></span>
            <span class="tbtn"><svg class="tic"><use href="#t-shrink"/></svg></span>
          </div>
        </aside>
        <div class="info">
          <div>正交顶视图</div>
          <div>(1) Cube</div>
          <div>10 Centimeters</div>
        </div>
      </div>

      <div class="navbtns">
        <span><svg class="ic"><use href="#zoomin"/></svg></span>
        <span><svg class="ic"><use href="#hand"/></svg></span>
        <span><svg class="ic"><use href="#camnav"/></svg></span>
        <span><svg class="ic"><use href="#gridic"/></svg></span>
      </div>
      <span class="sidetab">‹</span>
    </section>

    <section class="timeline">
      <div class="tlhdr">
        <span class="dd tl-type"><svg class="ic"><use href="#timeic"/></svg><svg class="chev"><use href="#chev"/></svg></span>
        <span class="joined tl-play"><span class="seg dark tl-a">回放<svg class="chev"><use href="#chev"/></svg></span><span class="seg dark grow tl-b">抠像(插帧)<svg class="chev"><use href="#chev"/></svg></span></span>
        <span class="tl-menu first">视图</span>
        <span class="tl-menu">标记</span>
        <span class="joined tl-rec"><span class="seg lit"><svg class="ic"><use href="#rec"/></svg></span><span class="seg mid grow"><svg class="chev dimc"><use href="#chev"/></svg></span></span>
        <span class="joined tl-trans"><span class="seg lit"><svg class="ic"><use href="#jstart"/></svg></span><span class="seg lit"><svg class="ic"><use href="#kprev"/></svg></span><span class="seg lit"><svg class="ic"><use href="#prev"/></svg></span><span class="seg lit"><svg class="ic"><use href="#play"/></svg></span><span class="seg lit"><svg class="ic"><use href="#knext"/></svg></span><span class="seg lit"><svg class="ic"><use href="#jend"/></svg></span></span>
        <span class="numfield tl-frame">1</span>
        <span class="joined tl-range"><span class="seg dark tl-timer"><svg class="ic"><use href="#timer"/></svg></span><span class="seg lit rangeval tl-start"><span>起始</span><span>1</span></span><span class="seg lit rangeval tl-end"><span>结束点</span><span>250</span></span></span>
      </div>
      <div class="ruler">
        <span class="rnum">20</span><span class="rnum">40</span><span class="rnum">60</span><span class="rnum">80</span><span class="rnum">100</span><span class="rnum">120</span><span class="rnum">140</span><span class="rnum">160</span><span class="rnum">180</span><span class="rnum">200</span><span class="rnum">220</span><span class="rnum">240</span>
        <span class="curframe">1</span>
      </div>
      <div class="tlscroll"><span class="sbar"><i></i><i></i></span><span class="tlarrow left">›</span><span class="tlarrow right">‹</span></div>
    </section>
  </div>

  <div class="rightcol">
    <section class="outliner">
      <div class="edhdr">
        <span class="dd o-a"><svg class="ic"><use href="#outmode"/></svg><svg class="chev"><use href="#chev"/></svg></span>
        <span class="dd o-b"><svg class="ic"><use href="#layers"/></svg><svg class="chev"><use href="#chev"/></svg></span>
        <span class="searchbox o-s"><svg class="ic"><use href="#search"/></svg></span>
      </div>
      <div class="orow one"><span class="colbox"><svg class="ic"><use href="#box"/></svg></span><span class="dim">场景集合</span></div>
      <div class="orow sel">
        <svg class="ic osel"><use href="#editmode"/></svg>
        <svg class="tri"><use href="#trir"/></svg>
        <span class="meshbox"><svg class="ic"><use href="#meshtri"/></svg></span>
        <span class="objname">Cube</span>
        <span class="databox"><svg class="ic"><use href="#datatri"/></svg></span>
        <svg class="ic oeye"><use href="#eye"/></svg>
        <svg class="ic ocam"><use href="#cam"/></svg>
      </div>
      <div class="orow"></div><div class="orow alt"></div><div class="orow"></div><div class="orow alt"></div><div class="orow"></div><div class="orow alt"></div><div class="orow"></div><div class="orow alt"></div>
    </section>

    <section class="props">
      <div class="edhdr phdr">
        <span class="dd o-a"><svg class="ic"><use href="#ptoggle"/></svg><svg class="chev"><use href="#chev"/></svg></span>
        <span class="searchbox p-s"><svg class="ic"><use href="#search"/></svg></span>
        <span class="dd p-d"><svg class="chev"><use href="#chev"/></svg></span>
      </div>
      <div class="pbody">
        <div class="ptabs">
          <div class="ptgroup">
            <span class="ptab"><svg class="ic"><use href="#ptool"/></svg></span>
          </div>
          <div class="ptgroup">
            <span class="ptab"><svg class="ic"><use href="#prender"/></svg></span>
            <span class="ptab"><svg class="ic"><use href="#poutput"/></svg></span>
            <span class="ptab"><svg class="ic"><use href="#layers"/></svg></span>
            <span class="ptab"><svg class="ic"><use href="#pscene"/></svg></span>
            <span class="ptab"><svg class="ic"><use href="#pworld"/></svg></span>
          </div>
          <div class="ptgroup">
            <span class="ptab"><svg class="ic"><use href="#pcoll"/></svg></span>
          </div>
          <div class="ptgroup">
            <span class="ptab active"><svg class="ic"><use href="#objo"/></svg></span>
            <span class="ptab"><svg class="ic"><use href="#pmod"/></svg></span>
            <span class="ptab"><svg class="ic"><use href="#ppart"/></svg></span>
            <span class="ptab"><svg class="ic"><use href="#pphys"/></svg></span>
            <span class="ptab"><svg class="ic"><use href="#pcons"/></svg></span>
            <span class="ptab"><svg class="ic"><use href="#pdata"/></svg></span>
            <span class="ptab"><svg class="ic"><use href="#pmat"/></svg></span>
          </div>
        </div>
        <div class="pmain">
          <div class="ctx"><svg class="ic"><use href="#obj"/></svg><span>Cube</span><svg class="ic pinic"><use href="#pin"/></svg></div>
          <div class="namefield"><span class="nficon"><svg class="ic"><use href="#obj"/></svg><svg class="chev"><use href="#chev"/></svg></span><span class="nfname">Cube</span></div>
          <div class="panel">
            <div class="phead"><svg class="tri"><use href="#trid"/></svg><span>变换</span><svg class="grip"><use href="#grip"/></svg></div>
            <div class="pcontent">
              <div class="vec">
                <span class="lab">位置 X</span><span class="fld">0 m</span><svg class="ic lk"><use href="#lock"/></svg><i class="dot"></i>
                <span class="lab">Y</span><span class="fld">0 m</span><svg class="ic lk"><use href="#lock"/></svg><i class="dot"></i>
                <span class="lab">Z</span><span class="fld">0 m</span><svg class="ic lk"><use href="#lock"/></svg><i class="dot"></i>
              </div>
              <div class="vec">
                <span class="lab">旋转 X</span><span class="fld">0°</span><svg class="ic lk"><use href="#lock"/></svg><i class="dot"></i>
                <span class="lab">Y</span><span class="fld">0°</span><svg class="ic lk"><use href="#lock"/></svg><i class="dot"></i>
                <span class="lab">Z</span><span class="fld">0°</span><svg class="ic lk"><use href="#lock"/></svg><i class="dot"></i>
              </div>
              <div class="vec">
                <span class="lab">模式</span><span class="fld darkf">XYZ 欧拉<svg class="chev"><use href="#chev"/></svg></span><span></span><i class="dot"></i>
              </div>
              <div class="vec">
                <span class="lab">缩放 X</span><span class="fld">1.000</span><svg class="ic lk"><use href="#lock"/></svg><i class="dot"></i>
                <span class="lab">Y</span><span class="fld">1.000</span><svg class="ic lk"><use href="#lock"/></svg><i class="dot"></i>
                <span class="lab">Z</span><span class="fld">1.000</span><svg class="ic lk"><use href="#lock"/></svg><i class="dot"></i>
              </div>
              <div class="subhead"><svg class="tri"><use href="#trir"/></svg><span>变换增量</span></div>
            </div>
          </div>
          <div class="phead closed"><svg class="tri"><use href="#trir"/></svg><span>关系</span><svg class="grip"><use href="#grip"/></svg></div>
          <div class="phead closed"><svg class="tri"><use href="#trir"/></svg><span>集合</span><svg class="grip"><use href="#grip"/></svg></div>
          <div class="phead closed"><svg class="tri"><use href="#trir"/></svg><span>实例化</span><svg class="grip"><use href="#grip"/></svg></div>
          <div class="phead closed"><svg class="tri"><use href="#trir"/></svg><span>运动路径</span><svg class="grip"><use href="#grip"/></svg></div>
          <div class="phead closed"><svg class="tri"><use href="#trir"/></svg><span>可见性</span><svg class="grip"><use href="#grip"/></svg></div>
          <div class="phead closed"><svg class="tri"><use href="#trir"/></svg><span>视图显示</span><svg class="grip"><use href="#grip"/></svg></div>
        </div>
      </div>
    </section>
  </div>
</main>

<footer class="statusbar">
  <svg class="ic st-m1"><use href="#mouseL"/></svg><span class="st-t1">挤出至游标</span>
  <svg class="st-m2"><use href="#mouseD"/></svg><span class="st-t2">移动</span>
  <svg class="ic st-m3"><use href="#mouseM"/></svg><span class="st-t3">旋转视图</span>
  <svg class="ic st-m4"><use href="#mouseR"/></svg><span class="st-t4">调用菜单</span>
  <span class="version">2.93.0</span>
</footer>
</body>
</html>
```

FILE: styles.css
```css
* { box-sizing: border-box; }
html, body { margin: 0; height: 100%; }
body {
  width: 1251px;
  height: 805px;
  overflow: hidden;
  display: grid;
  grid-template-rows: 27px 758px 20px;
  background: #1b1b1b;
  color: #c8c8c8;
  font: 10.3px/1.2 "DejaVu Sans", "Noto Sans CJK SC", sans-serif;
}
.sprite { position: absolute; width: 0; height: 0; }
.ic { width: 16px; height: 16px; flex: none; display: block; }
.chev { width: 10px; height: 10px; flex: none; display: block; color: #ccc; }
.chev.dimc { color: #666; }
.tri { width: 10px; height: 10px; flex: none; display: block; }

/* top bar */
.topbar { display: flex; align-items: flex-start; background: #232323; }
.logo { width: 18px; height: 16px; margin: 5px 0 0 9px; }
.mainmenu { display: flex; gap: 15px; margin: 7px 0 0 9px; width: 187px; }
.tabs { display: flex; gap: 2px; margin: 6px 0 0 7px; width: 625px; height: 21px; }
.tab { height: 21px; padding: 4px 0 0; border-radius: 4px 4px 0 0; background: #2b2b2b; color: #9a9a9a; text-align: center; flex: none; }
.tab:nth-child(1) { width: 52px; background: #3d3d3d; color: #eee; }
.tab:nth-child(2) { width: 64px; }
.tab:nth-child(3) { width: 64px; }
.tab:nth-child(4) { width: 70px; }
.tab:nth-child(5) { width: 82px; }
.tab:nth-child(6) { width: 57px; }
.tab:nth-child(7) { width: 69px; }
.tab:nth-child(8) { width: 67px; }
.tab:nth-child(9) { width: 84px; white-space: nowrap; }
.idfield { display: flex; height: 20px; margin-top: 3px; }
.scene { width: 190px; margin-left: 0; }
.layer { width: 191px; margin-left: 6px; }
.idicon { width: 30px; display: flex; align-items: center; justify-content: center; background: #2b2b2b; border-radius: 5px 0 0 5px; }
.idname { flex: 1; background: #1c1c1c; color: #ddd; padding: 3px 0 0 8px; border: 1px solid #333; border-width: 1px 0; }
.idbtn { width: 20px; display: flex; align-items: center; justify-content: center; background: #2b2b2b; }
.idbtn.lit { background: #545454; }
.idbtn:last-child { border-radius: 0 5px 5px 0; }

/* workspace */
.workspace { display: flex; min-height: 0; }
.leftcol { width: 1033px; padding-left: 2px; display: flex; flex-direction: column; gap: 3px; flex: none; }
.rightcol { flex: 1; margin-left: 3px; display: flex; flex-direction: column; gap: 2px; min-width: 0; }

/* viewport */
.viewport { position: relative; height: 698px; background: #3d3d3d; border-radius: 6px; overflow: hidden; isolation: isolate; }
.canvas { position: absolute; left: 0; top: 0; width: 1031px; height: 698px; z-index: -1; }
.axislabel text { font: bold 10.500px "DejaVu Sans", sans-serif; text-anchor: middle; fill: #15202a; }
.toolhdr { display: flex; align-items: center; height: 25px; background: #444; }
.hdr2 { display: flex; align-items: center; height: 26px; }
.dd { display: flex; align-items: center; justify-content: center; gap: 1px; height: 19px; border-radius: 4px; background: #2b2b2b; flex: none; color: #c8c8c8; }
.joined { display: flex; height: 19px; border-radius: 4px; overflow: hidden; flex: none; }
.seg { display: flex; align-items: center; justify-content: center; height: 100%; flex: none; width: 18px; gap: 1px; border-right: 1px solid #3a3a3a; }
.seg:last-child { border-right: 0; }
.seg.grow { flex: 1; }
.seg.lit { background: #545454; }
.seg.dim { background: #4a4a4a; }
.seg.dark { background: #2b2b2b; }
.seg.mid { background: #3f3f3f; }
.seg.blue { background: #4772b3; }
.th-tool { width: 30px; margin-left: 7px; }
.th-blob { width: 22px; height: 22px; margin-left: 13px; }
.th-check { display: flex; align-items: center; gap: 4px; width: 71px; margin-left: 15px; white-space: nowrap; color: #c8c8c8; }
.checkbox { width: 12px; height: 12px; background: #4772b3; border-radius: 2px; flex: none; }
.checkbox svg { display: block; }
.th-orient { width: 78px; margin-left: 232px; justify-content: flex-start; padding: 0 3px 0 4px; }
.ddlabel { flex: 1; padding-left: 5px; white-space: nowrap; }
.th-pivot { width: 30px; margin-left: 7px; }
.th-snap { width: 50px; margin-left: 7px; }
.th-prop { width: 48px; margin-left: 5px; }
.thright { display: flex; align-items: center; margin-left: auto; margin-right: 5px; }
.th-mirror { margin-right: 2px; }
.xyz { display: flex; width: 50px; height: 19px; border-radius: 4px; overflow: hidden; }
.xyz span { flex: 1; background: #545454; text-align: center; padding-top: 3px; color: #ddd; border-right: 1px solid #3a3a3a; }
.xyz span:last-child { border: 0; }
.automerge { display: flex; align-items: center; justify-content: center; width: 18px; height: 19px; margin-left: 7px; background: #4a4a4a; border-radius: 4px; }
.th-options { width: 50px; margin-left: 5px; gap: 6px; }
.h-mode { width: 108px; margin-left: 8px; justify-content: flex-start; padding: 0 4px 0 5px; }
.h-mode .ddlabel { padding-left: 8px; }
.h-sel { width: 56px; margin-left: 7px; }
.h-sel .seg { width: auto; flex: 1; }
.menus { display: flex; gap: 2px; margin-left: 7px; }
.menus span { display: block; height: 19px; padding-top: 3px; text-align: center; border-radius: 4px; background: #2e2e2e; color: #c8c8c8; }
.m35 { width: 35px; }
.m23 { width: 23px; }
.m25 { width: 25px; }
.m28 { width: 28px; }
.h-vis { width: 32px; }
.h-giz { width: 36px; margin-left: 6px; }
.h-over { width: 36px; margin-left: 8px; }
.h-xray { width: 18px; margin-left: 9px; }
.h-shade { width: 98px; margin-left: 7px; }
.h-shade .seg { width: 19.500px; }
.vbody { display: flex; }
.toolbar { width: 40px; margin: 8px 0 0 7px; display: flex; flex-direction: column; gap: 5px; flex: none; }
.tgroup { background: #2e2e2e; border-radius: 5px; }
.tgroup.last { border-radius: 5px 5px 0 0; }
.tbtn { position: relative; display: flex; align-items: center; justify-content: center; height: 35px; }
.tbtn.corner::after { content: ""; position: absolute; right: 3px; bottom: 3px; border: 2px solid transparent; border-right-color: #aaa; border-bottom-color: #aaa; }
.tbtn.active { background: #4772b3; }
.tic { width: 24px; height: 24px; display: block; }
.info { margin: 7px 0 0 18px; line-height: 18px; color: #eee; text-shadow: 1px 1px 1px #000; }
.navbtns { position: absolute; top: 143px; left: 996px; display: flex; flex-direction: column; gap: 4px; }
.navbtns span { width: 26px; height: 26px; border-radius: 50%; background: #2e2e2e; display: flex; align-items: center; justify-content: center; }
.sidetab { position: absolute; top: 63px; right: 0; width: 6px; height: 18px; color: #bbb; font-size: 13px; line-height: 16px; background: #333; border-radius: 3px 0 0 3px; }

/* timeline */
.timeline { height: 57px; background: #2a2a2a; border-radius: 6px; overflow: hidden; }
.tlhdr { display: flex; align-items: center; height: 25px; background: #303030; }
.tl-type { width: 30px; margin-left: 7px; }
.tl-play { width: 123px; margin-left: 6px; border: 1px solid #3c3c3c; }
.tl-a { width: 46px; gap: 5px; padding-left: 3px; }
.tl-b { gap: 4px; white-space: nowrap; padding-left: 3px; }
.tl-menu { margin-left: 15px; }
.tl-menu.first { margin-left: 10px; }
.tl-rec { width: 35px; margin-left: 190px; }
.tl-rec .seg:first-child { width: 19px; }
.tl-trans { width: 118px; margin-left: 10px; }
.tl-trans .seg { width: 19.600px; }
.numfield { display: block; width: 74px; height: 19px; margin-left: 156px; background: #545454; border-radius: 4px; text-align: center; padding-top: 3px; }
.tl-range { width: 201px; margin-left: 7px; }
.tl-timer { width: 19px; }
.rangeval { display: flex; justify-content: space-between; padding: 0 14px; white-space: nowrap; }
.tl-start { width: 87px; }
.tl-end { flex: 1; }
.ruler { position: relative; display: flex; height: 19px; padding: 3px 0 0 70.600px; background: #2a2a2a; color: #a8a8a8; }
.rnum { width: 76.800px; text-align: center; flex: none; }
.curframe { position: absolute; left: 24px; top: 3px; width: 25px; height: 16px; background: #4772b3; border-radius: 4px; color: #eee; text-align: center; padding-top: 1px; }
.tlscroll { position: relative; height: 13px; padding: 1px 7px 0; background: repeating-linear-gradient(to right, transparent 0 37.400px, #484848 37.400px 38.400px) 33px 0; }
.sbar { display: flex; justify-content: space-between; align-items: center; height: 9px; background: #6a6a6a; border-radius: 5px; padding: 0 1px; border: 1px solid #3a3a3a; }
.sbar i { display: block; width: 6px; height: 6px; border-radius: 50%; background: #3c3c3c; }
.tlarrow { position: absolute; top: -3px; color: #aaa; font-size: 12px; line-height: 12px; }
.tlarrow.left { left: 0; }
.tlarrow.right { right: 1px; }

/* outliner */
.outliner { height: 243px; background: #282828; border-radius: 6px 0 0 6px; overflow: hidden; flex: none; }
.edhdr { display: flex; align-items: center; height: 25px; background: #3d3d3d; flex: none; }
.o-a { width: 30px; margin-left: 9px; }
.o-b { width: 30px; margin-left: 7px; }
.o-s { width: 110px; margin-left: 18px; }
.searchbox { display: flex; align-items: center; height: 19px; padding-left: 3px; background: #1f1f1f; border-radius: 4px; }
.orow { display: flex; align-items: center; height: 20px; background: #282828; }
.orow.alt { background: #2b2b2b; }
.orow.one { padding-left: 21px; gap: 5px; height: 21px; padding-top: 2px; }
.colbox, .meshbox, .databox { display: flex; align-items: center; justify-content: center; width: 18px; height: 18px; border-radius: 4px; flex: none; }
.colbox { background: #4a4a4a; }
.dim { color: #aaa; }
.orow.sel { background: #3b5689; }
.osel { margin-left: 2px; }
.orow.sel .tri { margin-left: 9px; }
.meshbox { margin-left: 3px; background: #5a6f96; }
.objname { margin-left: 7px; width: 45px; color: #f0a828; }
.databox { background: #3c6a87; }
.oeye { margin-left: 41px; }
.ocam { margin-left: 4px; }

/* properties */
.props { flex: 1; min-height: 0; border-radius: 6px 0 0 0; overflow: hidden; background: #262626; display: flex; flex-direction: column; }
.phdr { height: 26px; }
.p-s { width: 111px; margin-left: 24px; }
.p-d { width: 20px; margin-left: 17px; }
.pbody { display: flex; flex: 1; min-height: 0; }
.ptabs { width: 28px; flex: none; padding: 8px 0 0 2px; display: flex; flex-direction: column; gap: 11px; background: #262626; }
.ptgroup { display: flex; flex-direction: column; gap: 3px; }
.ptgroup:nth-child(1) { margin-bottom: -1px; }
.ptgroup:nth-child(2) { margin-bottom: 2px; }
.ptgroup:nth-child(3) { margin-bottom: -1px; }
.ptab { display: flex; align-items: center; justify-content: center; width: 26px; height: 25px; background: #2e2e2e; border-radius: 4px 0 0 4px; }
.ptab.active { background: #3d3d3d; }
.pmain { flex: 1; min-width: 0; background: #3d3d3d; overflow: hidden; }
.ctx { display: flex; align-items: center; height: 34px; padding: 0 0 0 10px; color: #ddd; gap: 8px; }
.pinic { margin-left: auto; margin-right: 10px; }
.namefield { display: flex; height: 19px; margin: 10px 9px 0; border-radius: 4px; overflow: hidden; }
.nficon { display: flex; align-items: center; justify-content: center; width: 30px; background: #2b2b2b; }
.nfname { flex: 1; background: #1c1c1c; color: #ddd; padding: 3px 0 0 7px; }
.panel { margin-top: 10px; }
.phead { display: flex; align-items: center; height: 22px; padding-left: 8px; color: #ccc; background: #3d3d3d; }
.phead .tri { margin-right: 4px; }
.grip { width: 12px; height: 6px; margin-left: auto; margin-right: 7px; flex: none; display: block; }
.phead.closed { margin-top: 2px; }
.pcontent { background: #383838; padding: 9px 0 0; height: 254px; }
.vec { display: grid; grid-template-columns: 73px 65px 16px 14px; grid-auto-rows: 19.700px; align-items: center; margin-bottom: 5.500px; }
.lab { text-align: right; padding-right: 10px; white-space: nowrap; }
.fld { height: 19.700px; background: #545454; color: #e0e0e0; text-align: center; padding-top: 3px; border-bottom: 1px solid #444; white-space: nowrap; }
.vec .fld:first-of-type { border-radius: 4px 4px 0 0; }
.darkf { display: flex; align-items: center; justify-content: center; padding: 0; background: #282828; border-radius: 4px; border: 0; }
.lk { margin-left: 2px; }
.dot { display: block; width: 4px; height: 4px; margin-left: 13px; border-radius: 50%; background: #bbb; }
.subhead { display: flex; align-items: center; gap: 3px; padding: 10px 0 0 22px; }

/* status */
.statusbar { display: flex; align-items: center; background: #2d2d2d; color: #a8a8a8; }
.st-m1 { margin-left: 9px; }
.st-t1 { margin-left: 9px; }
.st-m2 { width: 20px; height: 16px; display: block; flex: none; margin-left: 9px; }
.st-t2 { margin-left: 10px; }
.st-m3 { margin-left: 99px; }
.st-t3 { margin-left: 10px; }
.st-m4 { margin-left: 169px; }
.st-t4 { margin-left: 10px; }
.version { margin-left: auto; margin-right: 9px; }
```
